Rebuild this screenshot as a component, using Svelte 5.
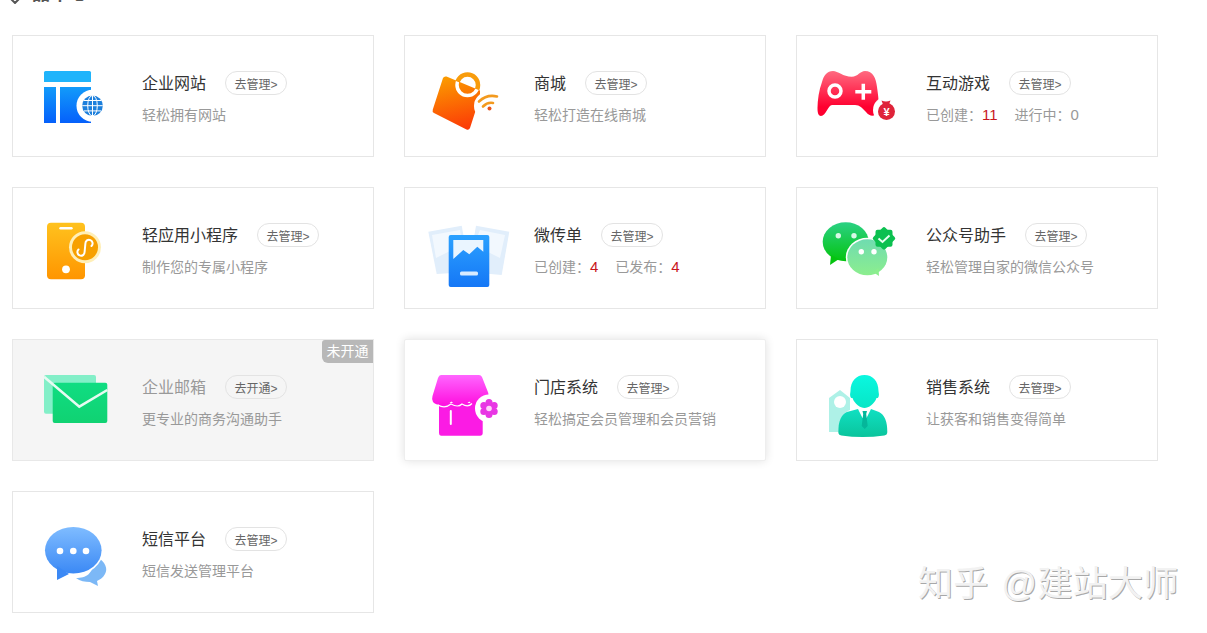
<script>
  const cards = [
    { icon: 'site', box: '13 36 129 120', title: '企业网站', desc: '轻松拥有网站' },
    { icon: 'shop', box: '405 36 129 120', title: '商城', desc: '轻松打造在线商城' },
    { icon: 'game', box: '797 36 129 120', title: '互动游戏', stats: [['已创建：', '11', true], ['进行中：', '0', false]] },
    { icon: 'app', box: '13 188 129 120', title: '轻应用小程序', desc: '制作您的专属小程序' },
    { icon: 'flyer', box: '405 188 129 120', title: '微传单', stats: [['已创建：', '4', true], ['已发布：', '4', true]] },
    { icon: 'wechat', box: '797 188 129 120', title: '公众号助手', desc: '轻松管理自家的微信公众号' },
    { icon: 'mail', box: '13 340 129 120', title: '企业邮箱', desc: '更专业的商务沟通助手', off: true },
    { icon: 'store', box: '405 340 129 120', title: '门店系统', desc: '轻松搞定会员管理和会员营销', hover: true },
    { icon: 'sales', box: '797 340 129 120', title: '销售系统', desc: '让获客和销售变得简单' },
    { icon: 'sms', box: '13 492 129 120', title: '短信平台', desc: '短信发送管理平台' }
  ];
</script>

<div class="page">
  <div class="heading">
    <svg class="chev" width="10" height="6" viewBox="0 0 10 6"><path d="M1 1l4 4 4-4" fill="none" stroke="#555" stroke-width="2" /></svg>
    <span>品中心</span>
  </div>

  <div class="grid">
    {#each cards as c}
      <div class="card" class:off={c.off} class:hover={c.hover}>
        {#if c.off}<div class="flag">未开通</div>{/if}
        <svg class="icon" width="129" height="120" viewBox={c.box}>
          {#if c.icon === 'site'}
            <defs>
              <linearGradient id="g-site" x1="0" y1="0" x2="0" y2="1"><stop offset="0" stop-color="#129bfa" /><stop offset="1" stop-color="#0560fb" /></linearGradient>
            </defs>
            <path d="M44 82V72.500q0-1.500 1.500-1.500h44q1.500 0 1.500 1.500V82z" fill="#1fb4fb" />
            <rect x="44" y="87" width="12" height="36" fill="url(#g-site)" />
            <rect x="60" y="87" width="31" height="36" fill="url(#g-site)" />
            <circle cx="92.500" cy="105.700" r="16" fill="#fff" />
            <circle cx="92.500" cy="105.700" r="10.300" fill="#1c7fdc" />
            <g fill="none" stroke="#fff" stroke-width="1">
              <ellipse cx="92.500" cy="105.700" rx="4.800" ry="10.300" />
              <path d="M92.500 95.400v20.600M82.200 105.700h20.600M84 100.500h17M84 110.900h17" />
            </g>
          {:else if c.icon === 'shop'}
            <defs>
              <linearGradient id="g-shop" x1="0.400" y1="0" x2="0.600" y2="1"><stop offset="0" stop-color="#fb9a00" /><stop offset="1" stop-color="#fc3a06" /></linearGradient>
              <clipPath id="c-shop"><path d="M445 76.700L480 90.500V97L468.300 130 432.700 111.700z" /></clipPath>
            </defs>
            <circle cx="467.500" cy="85" r="10.500" fill="none" stroke="#f89c0c" stroke-width="4.500" />
            <path d="M446.500 76.500L480 90.500V97L470 128q-1 2.500-3.500 1.500L434 113q-2-1-1.200-3.500L443 78q1-2 3.500-1.500z" fill="url(#g-shop)" />
            <g clip-path="url(#c-shop)">
              <circle cx="467.500" cy="85" r="10.500" fill="none" stroke="#fff" stroke-width="3.500" />
            </g>
            <circle cx="488" cy="106" r="14" fill="#fff" />
            <g fill="none" stroke="#f39a1e" stroke-width="2.600" stroke-linecap="round">
              <path d="M479 101.500q8-7.500 18-5" />
              <path d="M483 106.500q4.500-4.500 10-3.500" />
            </g>
            <circle cx="489.500" cy="108.500" r="2" fill="#e8541a" />
          {:else if c.icon === 'game'}
            <defs>
              <linearGradient id="g-game" x1="0" y1="0" x2="0" y2="1"><stop offset="0" stop-color="#ff6a80" /><stop offset="0.800" stop-color="#ff0030" /></linearGradient>
            </defs>
            <path d="M833 71C838 71 843 76.700 851.700 76.700 858 76.700 860 71 865 71 873 71 876 78 877 87 878 95 880 105 877 112 875 117 870 117 866 112 862 108 860 105 855 105H832C828 105 826 116 821 116 818 116 817.500 112 817.500 108 817.500 100 819 90 822 82 824 75 827 71 833 71z" fill="url(#g-game)" />
            <circle cx="835" cy="91" r="6" fill="none" stroke="#fff" stroke-width="3.500" />
            <path d="M863.300 83.700v16M855.300 91.700h16" stroke="#fff" stroke-width="3.500" fill="none" />
            <circle cx="886" cy="110" r="13" fill="#fff" />
            <path d="M881.500 100.500q4.500 2 9 0l-1.500 4h-6z" fill="#df2339" />
            <circle cx="886.500" cy="111.500" r="8.500" fill="#df2339" />
            <text x="886.500" y="115.500" class="yen">¥</text>
          {:else if c.icon === 'app'}
            <defs>
              <linearGradient id="g-app" x1="0" y1="0" x2="0" y2="1"><stop offset="0" stop-color="#ffc21e" /><stop offset="1" stop-color="#ff9500" /></linearGradient>
            </defs>
            <rect x="47" y="222.700" width="38" height="56.500" rx="4" fill="url(#g-app)" />
            <rect x="59.300" y="227" width="13.400" height="2.400" rx="1.200" fill="#fff" />
            <circle cx="66" cy="269.300" r="3.900" fill="#fff" />
            <circle cx="85" cy="247.300" r="16" fill="#ffefb8" />
            <circle cx="85" cy="247.300" r="13" fill="#f7a000" />
            <path d="M78.500 249.500A3.600 3.600 0 1 0 84.600 252L85.400 243.500A3.600 3.600 0 1 1 91.500 246" fill="none" stroke="#fff" stroke-width="2" stroke-linecap="round" />
          {:else if c.icon === 'flyer'}
            <defs>
              <linearGradient id="g-flyer" x1="0" y1="0" x2="0" y2="1"><stop offset="0" stop-color="#2ba1ff" /><stop offset="1" stop-color="#1577f6" /></linearGradient>
            </defs>
            <path d="M428.300 231.700L461.700 225.700 470 272 436.700 274z" fill="#e1eefb" />
            <path d="M476 225.700L509.300 231.700 501.700 275 468 272z" fill="#e1eefb" />
            <path d="M432 235L460 230 462 245 436 258z" fill="#f2f8fe" />
            <path d="M480 230L505 235 500 258 474 245z" fill="#f2f8fe" />
            <rect x="448.700" y="235" width="40.600" height="52" rx="2" fill="url(#g-flyer)" />
            <path d="M453.300 240H483.300V251.700L477.300 246.700 469.300 254.300 463.300 250 453.300 259z" fill="#eaf5ff" />
            <rect x="460" y="271.500" width="18" height="4" rx="1.500" fill="#d8ebff" />
          {:else if c.icon === 'wechat'}
            <defs>
              <linearGradient id="g-we1" x1="0" y1="0" x2="0" y2="1"><stop offset="0" stop-color="#2bd184" /><stop offset="1" stop-color="#04c40f" /></linearGradient>
              <linearGradient id="g-we2" x1="0" y1="0" x2="0" y2="1"><stop offset="0" stop-color="#6fdcb0" /><stop offset="1" stop-color="#8cee8e" /></linearGradient>
            </defs>
            <ellipse cx="845.700" cy="241.700" rx="23" ry="19.500" fill="url(#g-we1)" />
            <path d="M831 255l-1 10 9-6z" fill="#04c40f" />
            <circle cx="838.300" cy="235.700" r="2.700" fill="#d8f8e6" />
            <circle cx="854" cy="235.700" r="2.700" fill="#d8f8e6" />
            <ellipse cx="867.300" cy="257.300" rx="21.500" ry="19.500" fill="#fff" />
            <ellipse cx="867.300" cy="257.300" rx="20" ry="18" fill="url(#g-we2)" />
            <path d="M873 272l6 4-.5-8z" fill="#8cee8e" />
            <circle cx="861.300" cy="251.700" r="2.700" fill="#fff" />
            <circle cx="874" cy="251.700" r="2.700" fill="#fff" />
            <rect x="875.500" y="229.800" width="17" height="17" rx="2" fill="#0cc050" />
            <rect x="875.500" y="229.800" width="17" height="17" rx="2" fill="#0cc050" transform="rotate(45 884 238.300)" />
            <path d="M878.500 238.500l4 3.500 7-6.500" fill="none" stroke="#e6fff0" stroke-width="2" />
          {:else if c.icon === 'mail'}
            <defs>
              <linearGradient id="g-mail" x1="0" y1="0" x2="0" y2="1"><stop offset="0" stop-color="#10dd82" /><stop offset="1" stop-color="#10d272" /></linearGradient>
            </defs>
            <rect x="44" y="375" width="52" height="38.700" rx="2" fill="#83efc8" />
            <rect x="52.700" y="382.700" width="54.600" height="40.300" rx="2" fill="url(#g-mail)" />
            <path d="M44 376.700L79.300 406.700 107.300 390" fill="none" stroke="#e6fbf2" stroke-width="2.600" />
          {:else if c.icon === 'store'}
            <defs>
              <linearGradient id="g-store" x1="0" y1="0" x2="0" y2="1"><stop offset="0" stop-color="#ff66ff" /><stop offset="1" stop-color="#ff10df" /></linearGradient>
            </defs>
            <path d="M439 403H482.700V433q0 2.700-2.700 2.700H441q-2 0-2-2.700z" fill="#fb1be4" />
            <path d="M441 375H479q2 0 3 2l6.300 16q1 3-1 6-3 6-9 6-7 0-9-3.500-3.500 3.500-9 3.500t-9-3.500q-3 3.500-9.500 3.500T433 402q-1.500-3-.5-6L438 378q1-3 3-3z" fill="url(#g-store)" />
            <path d="M438 405q7 4 13-1 7 4 11 0 6 4 10-.5" fill="none" stroke="#fff" stroke-width="1.200" />
            <rect x="449.800" y="410" width="2" height="15" rx="1" fill="#fff" />
            <circle cx="489" cy="408.500" r="14" fill="#fff" />
            <g fill="#e836e4">
              <circle cx="489" cy="402.500" r="3.500" />
              <circle cx="494.200" cy="405.500" r="3.500" />
              <circle cx="494.200" cy="411.500" r="3.500" />
              <circle cx="489" cy="414.500" r="3.500" />
              <circle cx="483.800" cy="411.500" r="3.500" />
              <circle cx="483.800" cy="405.500" r="3.500" />
              <circle cx="489" cy="408.500" r="5" />
            </g>
            <circle cx="489" cy="408.500" r="2.800" fill="#ffd0fb" />
          {:else if c.icon === 'sales'}
            <defs>
              <linearGradient id="g-head" x1="0" y1="0" x2="0" y2="1"><stop offset="0" stop-color="#0af7e0" /><stop offset="1" stop-color="#07e6c6" /></linearGradient>
              <linearGradient id="g-body" x1="0" y1="0" x2="0" y2="1"><stop offset="0" stop-color="#10e0c2" /><stop offset="1" stop-color="#0ac49c" /></linearGradient>
            </defs>
            <path d="M829 398L840 390 850 398V432H829z" fill="#aef1e7" />
            <circle cx="840" cy="402" r="6" fill="#fff" />
            <path d="M862 409H867L877 410q12 4 12 22 0 4-3 4-22 3-43 0-3 0-3-4 0-17 12-21z" fill="#fff" stroke="#fff" stroke-width="3" />
            <path d="M858 409l4.500 9 2-1.500 2 1.500 4.500-9 8 3q8.300 4 8.300 20 0 3-3 3.500-22 3-43 0-3-.5-3-3.500 0-16 8.500-20z" fill="url(#g-body)" />
            <path d="M862.500 411h4.500l-.8 3 1.500 12-3 3-3-3 1.500-12z" fill="#05b69a" />
            <path d="M850.500 391c0-10 6-16 14-16s14 6 14 16c0 2 1 3 0 6-1 1.500-1.500 1-2 1-2 6-8 10-12 10s-10-4-12-10c-.5 0-1 .5-2-1-1-3 0-4 0-6z" fill="url(#g-head)" />
          {:else if c.icon === 'sms'}
            <defs>
              <linearGradient id="g-sms" x1="0" y1="0" x2="0" y2="1"><stop offset="0" stop-color="#7fbcff" /><stop offset="1" stop-color="#3b89f5" /></linearGradient>
            </defs>
            <path d="M96 556c10 6 12 13 9 18-2 4-6 6-8 7l1 5-8-4c-5 0-10-1-14-4 10 0 17-3 20-22z" fill="#7cb8f6" />
            <ellipse cx="73.300" cy="550.300" rx="30" ry="25" fill="#fff" />
            <ellipse cx="73.300" cy="550.300" rx="28.300" ry="23.300" fill="url(#g-sms)" />
            <path d="M57 566v14l12-6z" fill="#3b89f5" />
            <circle cx="60" cy="551" r="3.300" fill="#fff" />
            <circle cx="73.300" cy="551" r="3.300" fill="#fff" />
            <circle cx="86" cy="551" r="3.300" fill="#fff" />
          {/if}
        </svg>
        <div class="info">
          <div class="top">
            <span class="title">{c.title}</span>
            <span class="btn">{c.off ? '去开通' : '去管理'}&gt;</span>
          </div>
          {#if c.stats}
            <div class="desc">
              {#each c.stats as s}
                <span class="stat">{s[0]}<b class:red={s[2]}>{s[1]}</b></span>
              {/each}
            </div>
          {:else}
            <div class="desc">{c.desc}</div>
          {/if}
        </div>
      </div>
    {/each}
  </div>

  <div class="mark">知乎 @建站大师</div>
</div>

<style>
  :global(body) {
    background: #fff;
    overflow: hidden;
  }

  .page {
    position: relative;
    height: 633px;
    padding-left: 12px;
    font-family: "Liberation Sans", "Noto Sans CJK SC", sans-serif;
    overflow: hidden;
  }

  .heading {
    display: flex;
    align-items: center;
    gap: 12px;
    height: 26px;
    margin: -19px 0 28px -2px;
    font-size: 18px;
    font-weight: 700;
    color: #555;
    line-height: 26px;
  }

  .heading span {
    letter-spacing: 1px;
  }

  .chev {
    margin-top: 14px;
  }

  .grid {
    display: grid;
    grid-template-columns: repeat(3, 362px);
    grid-auto-rows: 122px;
    gap: 30px;
  }

  .card {
    position: relative;
    display: flex;
    box-sizing: border-box;
    border: 1px solid #e6e6e6;
    background: #fff;
  }

  .card.off {
    background: #f5f5f5;
    border-color: #e8e8e8;
  }

  .card.hover {
    border-color: #eee;
    border-radius: 2px;
    box-shadow: 0 0 10px rgba(0, 0, 0, 0.12);
  }

  .flag {
    position: absolute;
    top: 0;
    right: 0;
    width: 51px;
    height: 23px;
    border-radius: 3px 0 0 6px;
    background: #b8b8b8;
    color: #fff;
    font-size: 14px;
    line-height: 23px;
    text-align: center;
  }

  .icon {
    display: block;
    flex: none;
  }

  .yen {
    fill: #fff;
    font-size: 11px;
    font-weight: 700;
    text-anchor: middle;
  }

  .info {
    padding-top: 35px;
  }

  .top {
    display: flex;
    align-items: center;
    gap: 19px;
    height: 24px;
  }

  .title {
    margin-bottom: 3px;
    font-size: 16px;
    color: #333;
  }

  .off .title {
    color: #999;
  }

  .btn {
    box-sizing: border-box;
    width: 62px;
    height: 24px;
    padding-top: 1px;
    border: 1px solid #e3e3e3;
    border-radius: 12px;
    color: #666;
    font-size: 12px;
    line-height: 24px;
    text-align: center;
  }

  .desc {
    display: flex;
    gap: 17px;
    margin-top: 10px;
    color: #999;
    font-size: 14px;
    line-height: 20px;
  }

  .stat b {
    font-weight: 400;
    font-size: 15px;
  }

  .stat b.red {
    color: #c8161d;
  }

  .mark {
    position: absolute;
    left: 918px;
    top: 562px;
    color: #f2f2f2;
    font-size: 35px;
    line-height: 44px;
    letter-spacing: 0.3px;
    word-spacing: 3px;
    white-space: nowrap;
    text-shadow: 1px 1px 0 #a8a8a8, -1px -1px 0 #fff;
  }
</style>
